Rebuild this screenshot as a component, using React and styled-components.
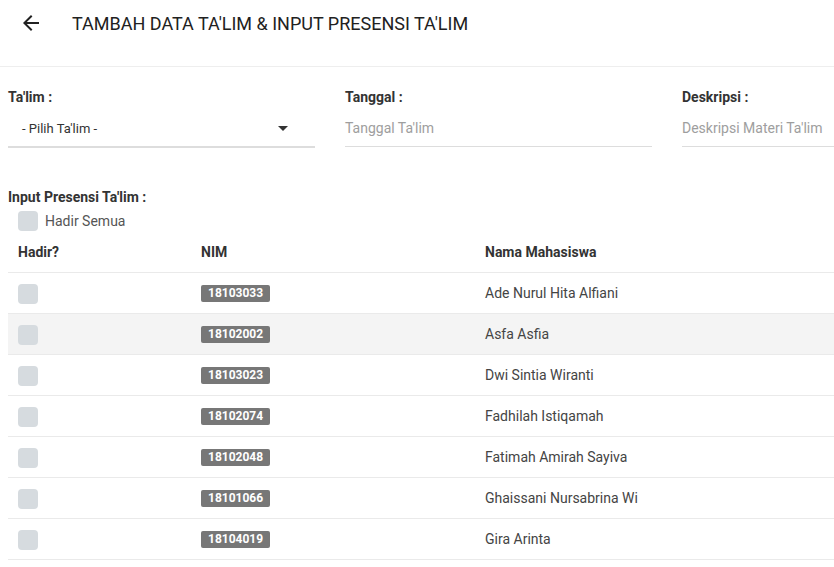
import React, { useState } from 'react'
import styled, { createGlobalStyle } from 'styled-components'

const GlobalStyle = createGlobalStyle`
  html, body {
    margin: 0;
    padding: 0;
    background: #fff;
    overflow: hidden;
  }
  body {
    font-family: Roboto, "Liberation Sans", Arial, sans-serif;
    color: #333;
  }
`

const mahasiswa = [
  { nim: '18103033', nama: 'Ade Nurul Hita Alfiani' },
  { nim: '18102002', nama: 'Asfa Asfia' },
  { nim: '18103023', nama: 'Dwi Sintia Wiranti' },
  { nim: '18102074', nama: 'Fadhilah Istiqamah' },
  { nim: '18102048', nama: 'Fatimah Amirah Sayiva' },
  { nim: '18101066', nama: 'Ghaissani Nursabrina Wi' },
  { nim: '18104019', nama: 'Gira Arinta' }
]

const Page = styled.div`
  width: 834px;
  height: 567px;
  overflow: hidden;
`

const Header = styled.header`
  display: flex;
  align-items: center;
  height: 46px;
  padding-bottom: 20px;
  border-bottom: 1px solid #eee;
`

const BackButton = styled.button`
  display: flex;
  align-items: center;
  justify-content: center;
  width: 24px;
  height: 24px;
  margin-left: 19px;
  margin-right: 29px;
  padding: 0;
  border: 0;
  background: none;
  cursor: pointer;
`

const Title = styled.h1`
  margin: 0;
  font-size: 18px;
  font-weight: 400;
  color: #212121;
  white-space: nowrap;
`

const Content = styled.div`
  width: 981px;
  padding: 20px 0 0 8px;
`

const Form = styled.div`
  display: grid;
  grid-template-columns: repeat(3, 307px);
  column-gap: 30px;
`

const Label = styled.label`
  display: block;
  height: 20px;
  line-height: 20px;
  font-size: 14px;
  font-weight: 700;
  color: #333;
`

const Field = styled.div`
  display: flex;
  align-items: center;
  justify-content: space-between;
  height: 36px;
  margin-top: 3px;
  padding: 0 ${(p) => (p.$select ? '27px 0 14px' : '0')};
  border-bottom: ${(p) => (p.$select ? '2px' : '1px')} solid #ddd;
  font-size: ${(p) => (p.$select ? '13px' : '14px')};
  color: ${(p) => (p.$select ? '#333' : '#9e9e9e')};
`

const Caret = styled.span`
  width: 0;
  height: 0;
  border-left: 5px solid transparent;
  border-right: 5px solid transparent;
  border-top: 5px solid #333;
`

const Section = styled.div`
  margin-top: 39px;
`

const CheckAll = styled.label`
  display: flex;
  align-items: center;
  gap: 7px;
  height: 24px;
  margin-top: 2px;
  padding-left: 10px;
  font-size: 14px;
  color: #555;
`

const Check = styled.span`
  display: block;
  width: 20px;
  height: 20px;
  margin-top: ${(p) => (p.$inRow ? '2px' : '0')};
  border-radius: 4px;
  background: ${(p) => (p.$checked ? '#26a69a' : '#d6dbdf')};
  cursor: pointer;
`

const Table = styled.table`
  width: 981px;
  border-collapse: collapse;
  table-layout: fixed;
  font-size: 14px;
`

const Col = styled.col`
  width: ${(p) => p.$width || 'auto'};
`

const HeadCell = styled.th`
  height: 37px;
  padding: 0 10px 2px;
  text-align: left;
  font-weight: 700;
  color: #333;
  border-bottom: 1px solid #eaeaea;
`

const Row = styled.tr`
  background: ${(p) => (p.$striped ? '#f4f4f4' : '#fff')};
`

const Cell = styled.td`
  height: 40px;
  padding: 0 10px;
  color: #444;
  border-bottom: 1px solid #eaeaea;
  vertical-align: middle;
`

const Badge = styled.span`
  display: inline-block;
  padding: 0 7px;
  height: 17px;
  line-height: 17px;
  border-radius: 2px;
  background: #777;
  color: #fff;
  font-size: 12px;
  font-weight: 700;
  vertical-align: middle;
`

const ArrowBack = () => (
  <svg width="24" height="24" viewBox="0 0 24 24">
    <path d="M20 11H7.83l5.59-5.59L12 4l-8 8 8 8 1.41-1.41L7.83 13H20v-2z" fill="#212121" />
  </svg>
)

const App = () => {
  const [hadir, setHadir] = useState({})

  const allChecked = mahasiswa.every((m) => hadir[m.nim])

  const toggleAll = () => {
    const next = {}
    mahasiswa.forEach((m) => {
      next[m.nim] = !allChecked
    })
    setHadir(next)
  }

  return (
    <Page>
      <GlobalStyle />
      <Header>
        <BackButton aria-label="kembali">
          <ArrowBack />
        </BackButton>
        <Title>TAMBAH DATA TA'LIM &amp; INPUT PRESENSI TA'LIM</Title>
      </Header>

      <Content>
        <Form>
          <div>
            <Label>Ta'lim :</Label>
            <Field $select>
              <span>- Pilih Ta'lim -</span>
              <Caret />
            </Field>
          </div>
          <div>
            <Label>Tanggal :</Label>
            <Field>Tanggal Ta'lim</Field>
          </div>
          <div>
            <Label>Deskripsi :</Label>
            <Field>Deskripsi Materi Ta'lim</Field>
          </div>
        </Form>

        <Section>
          <Label>Input Presensi Ta'lim :</Label>
          <CheckAll onClick={toggleAll}>
            <Check $checked={allChecked} />
            Hadir Semua
          </CheckAll>

          <Table>
            <colgroup>
              <Col $width="183px" />
              <Col $width="284px" />
              <Col />
            </colgroup>
            <thead>
              <tr>
                <HeadCell>Hadir?</HeadCell>
                <HeadCell>NIM</HeadCell>
                <HeadCell>Nama Mahasiswa</HeadCell>
              </tr>
            </thead>
            <tbody>
              {mahasiswa.map((m, index) => (
                <Row key={m.nim} $striped={index === 1}>
                  <Cell>
                    <Check
                      $inRow
                      $checked={!!hadir[m.nim]}
                      onClick={() => setHadir({ ...hadir, [m.nim]: !hadir[m.nim] })}
                    />
                  </Cell>
                  <Cell>
                    <Badge>{m.nim}</Badge>
                  </Cell>
                  <Cell>{m.nama}</Cell>
                </Row>
              ))}
            </tbody>
          </Table>
        </Section>
      </Content>
    </Page>
  )
}

export default App
